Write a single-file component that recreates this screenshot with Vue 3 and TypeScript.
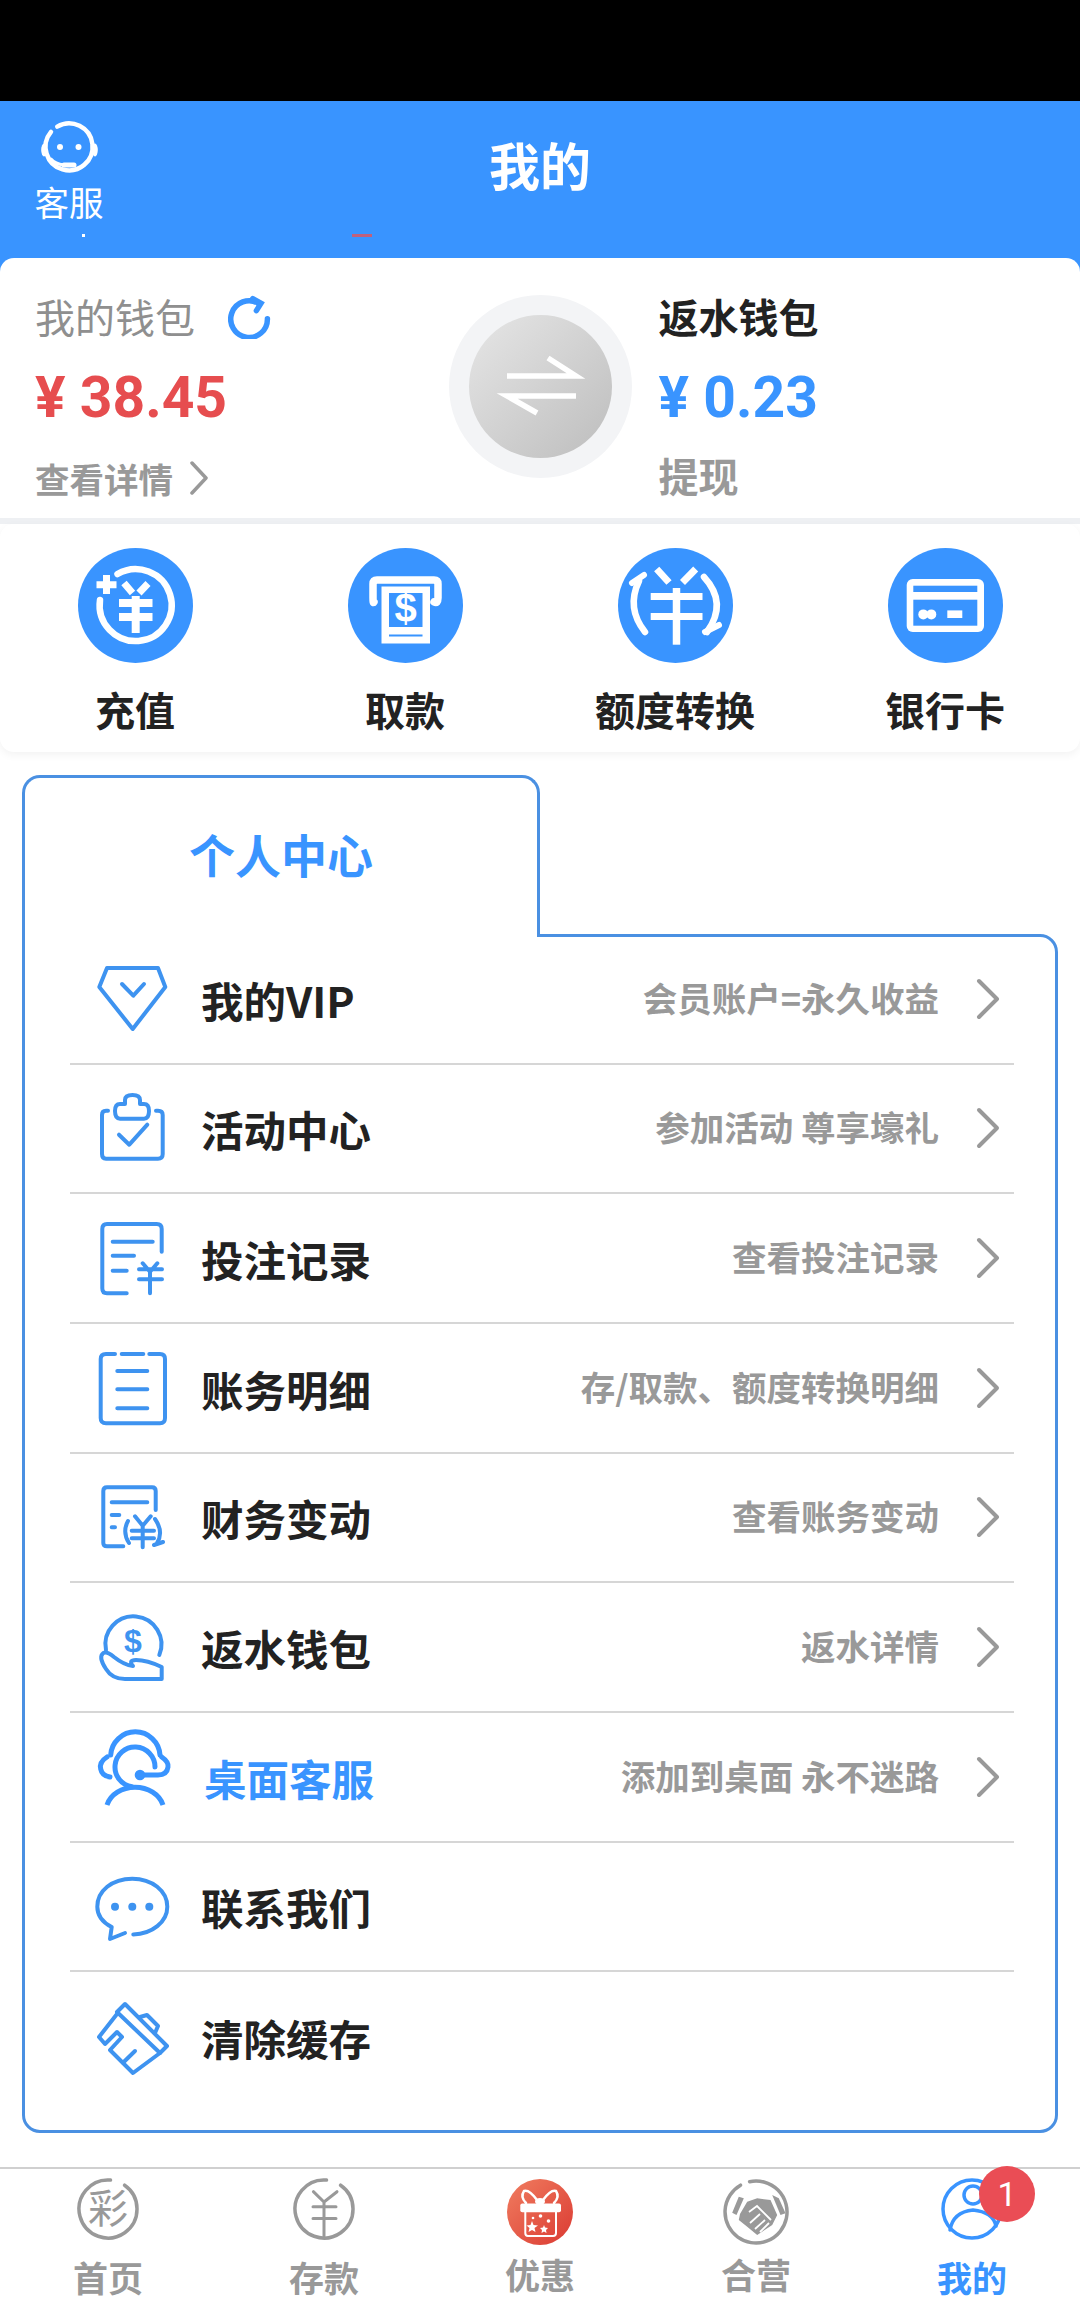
<script setup lang="ts">
interface Row {
  icon: string
  title: string
  sub?: string
  accent?: boolean
}
const actions = ['充值', '取款', '额度转换', '银行卡']
const rows: Row[] = [
  { icon: 'vip', title: '我的VIP', sub: '会员账户=永久收益' },
  { icon: 'activity', title: '活动中心', sub: '参加活动 尊享壕礼' },
  { icon: 'bets', title: '投注记录', sub: '查看投注记录' },
  { icon: 'ledger', title: '账务明细', sub: '存/取款、额度转换明细' },
  { icon: 'finance', title: '财务变动', sub: '查看账务变动' },
  { icon: 'rebate', title: '返水钱包', sub: '返水详情' },
  { icon: 'service', title: '桌面客服', sub: '添加到桌面 永不迷路', accent: true },
  { icon: 'chat', title: '联系我们' },
  { icon: 'brush', title: '清除缓存' }
]
</script>

<template>
  <div class="page">
    <div class="status"></div>
    <header class="header">
      <div class="service">
        <svg class="service-icon" viewBox="0 0 66 66" fill="none" stroke="#fff" stroke-width="4.500" stroke-linecap="round">
          <path d="M21.250 12.600 A23.500 23.500 0 1 1 15 17.900" />
          <path d="M15 45 Q19 50 28 51" stroke-width="3" />
          <path d="M28 51 H38" stroke-width="5" />
          <ellipse cx="8" cy="36" rx="2.800" ry="6.500" fill="#fff" stroke="none" />
          <ellipse cx="59" cy="36" rx="2.800" ry="6.500" fill="#fff" stroke="none" />
          <circle cx="24" cy="33" r="3" fill="#fff" stroke="none" />
          <circle cx="42.500" cy="33" r="3" fill="#fff" stroke="none" />
        </svg>
        <span class="service-label">客服</span>
      </div>
      <h1 class="title">我的</h1>
      <i class="speck speck-white"></i>
      <i class="speck speck-red"></i>
    </header>

    <div class="wallet-wrap">
      <section class="wallet">
        <div class="wallet-col">
          <div class="wallet-head">
            <span class="wallet-name">我的钱包</span>
            <svg class="refresh" viewBox="0 0 48 48" fill="none" stroke="#3994ff" stroke-width="6" stroke-linecap="round">
              <path d="M33 9 A20 20 0 1 0 43 26" />
              <path d="M27 4 L36 9 L31 17" fill="none" />
            </svg>
          </div>
          <div class="amount amount-red">¥ 38.45</div>
          <div class="wallet-link">
            <span>查看详情</span>
            <svg class="link-arrow" viewBox="0 0 20 34" fill="none" stroke="#999" stroke-width="3.500" stroke-linecap="round" stroke-linejoin="round">
              <path d="M3 2 L17 17 L3 32" />
            </svg>
          </div>
        </div>
        <div class="swap">
          <div class="swap-inner">
            <svg viewBox="0 0 143 143" fill="none" stroke="#fff" stroke-width="5.500">
              <path d="M38 61 H107 L79 43" />
              <path d="M107 81 H38 L68 98" />
            </svg>
          </div>
        </div>
        <div class="wallet-col wallet-col-right">
          <div class="wallet-head"><span class="wallet-name wallet-name-strong">返水钱包</span></div>
          <div class="amount amount-blue">¥ 0.23</div>
          <div class="wallet-link wallet-link-big">提现</div>
        </div>
      </section>
    </div>

    <section class="actions">
      <div v-for="(label, i) in actions" :key="label" class="action">
        <svg class="action-icon" viewBox="0 0 115 115">
          <circle cx="57.500" cy="57.500" r="57.500" fill="#3994ff" />
          <g v-if="i === 0" fill="none" stroke="#fff">
            <path d="M39.500 26 A36 36 0 1 1 22 52" stroke-width="6.500" stroke-linecap="round" />
            <path d="M18.500 36.700 H38.500 M28.500 27 V46" stroke-width="7" />
            <path d="M46 35 L54.500 45 M70 35.500 L61 45" stroke-width="7" />
            <path d="M41 55 H74.500 M41 69 H74.500" stroke-width="8" />
            <path d="M57.700 48 V85" stroke-width="8" />
          </g>
          <g v-else-if="i === 1">
            <path d="M26 54 Q25 56 25 50 V36 Q25 32 29 32 H86 Q90 32 90 36 V50 Q90 56 86 54" fill="none" stroke="#fff" stroke-width="7.500" stroke-linecap="round" />
            <rect x="33.500" y="38.500" width="48.500" height="57" fill="#fff" />
            <rect x="41" y="45" width="33.500" height="34" fill="#3994ff" />
            <rect x="41" y="86.500" width="33.500" height="2" fill="#3994ff" />
            <text x="57.700" y="74" text-anchor="middle" class="dollar">$</text>
          </g>
          <g v-else-if="i === 2" fill="none" stroke="#fff">
            <path d="M21 33 Q8 60 27 84" stroke-width="6.500" stroke-linecap="round" />
            <path d="M14 35 L26 27" stroke-width="6" stroke-linecap="round" />
            <path d="M86 29 Q110 55 89 84" stroke-width="6.500" stroke-linecap="round" />
            <path d="M101 77 L87 84" stroke-width="6" stroke-linecap="round" />
            <path d="M38.700 21 L51 34.500 M77.700 21 L64.500 34.500" stroke-width="7" />
            <path d="M32.700 48.500 H84.500 M32.700 68.500 H84.500" stroke-width="7" />
            <path d="M58.500 40 V96.700" stroke-width="7.500" />
          </g>
          <g v-else>
            <rect x="18.700" y="31" width="77.300" height="53" rx="6" fill="#fff" />
            <rect x="25.300" y="37.700" width="64" height="6.300" fill="#3994ff" />
            <rect x="25.300" y="51.700" width="64" height="26" fill="#3994ff" />
            <circle cx="35.300" cy="66.400" r="5" fill="#fff" />
            <circle cx="43.300" cy="66.400" r="5" fill="#fff" />
            <rect x="59.300" y="62.400" width="15" height="7.600" fill="#fff" />
          </g>
        </svg>
        <span class="action-label">{{ label }}</span>
      </div>
    </section>

    <section class="center">
      <div class="tab">个人中心</div>
      <div class="panel">
        <div v-for="row in rows" :key="row.title" class="row">
          <svg class="row-icon" viewBox="0 0 80 80" fill="none" stroke="#3e93f0" stroke-width="4" stroke-linecap="round" stroke-linejoin="round">
            <template v-if="row.icon === 'vip'">
              <path d="M15 9 H66 L73.300 28 L40.700 70 L7.300 28 Z" />
              <path d="M30 25 L41.300 36.700 L52 25" />
            </template>
            <template v-else-if="row.icon === 'activity'">
              <path d="M16 22.700 H14 Q10 22.700 10 27 V66 Q10 70.700 14 70.700 H66 Q70.700 70.700 70.700 66 V27 Q70.700 22.700 66 22.700 H64" />
              <path d="M33 16 V12 Q33 7 40.500 7 Q48 7 48 12 V16 H52 Q57 16 57 23 Q57 30.700 52 30.700 H28 Q23 30.700 23 23 Q23 16 28 16 Z" />
              <path d="M27 46.700 L37.300 56.700 L55.300 36.700" />
            </template>
            <template v-else-if="row.icon === 'bets'">
              <path d="M69.700 33.700 V11 Q69.700 6 64.700 6 H15 Q10.300 6 10.300 11 V70.300 Q10.300 75.300 15 75.300 H34.700" />
              <path d="M20.700 23.700 H60.700 M20.700 37.700 H42 M20.700 52.700 H34.700" />
              <path d="M50.700 45.300 L58 53.700 L65.300 45.300 M47 51.300 H70 M47 61.300 H70 M58 53.700 V75.300" />
            </template>
            <template v-else-if="row.icon === 'ledger'">
              <path d="M23 6 H14 Q8.700 6 8.700 11 V70 Q8.700 75.300 14 75.300 H68 Q73 75.300 73 70 V11 Q73 6 68 6 H57.300" />
              <path d="M29.700 6 H51.300 M25.300 23 H55.300 M25.300 41.300 H55.300 M25.300 60.300 H55.300" />
            </template>
            <template v-else-if="row.icon === 'finance'">
              <path d="M63.700 33 V14 Q63.700 10.300 60 10.300 H15 Q11.300 10.300 11.300 14 V66 Q11.300 69.300 15 69.300 H31.300" />
              <path d="M19.700 25.300 H55.300 M19.700 38 H27.300 M19.700 50.300 H23" />
              <path d="M36 44 Q30 55 37 66 M63 42 Q72 55 65 66 M71 65 L62 68" />
              <path d="M43 39.300 L50.700 48.700 L58.700 39.300 M39.700 53.700 H62 M39.700 61.300 H62 M50.700 48.700 V70.300" />
            </template>
            <template v-else-if="row.icon === 'rebate'">
              <path d="M14 43 A28 28 0 1 1 67.300 48" />
              <path d="M11.300 46 Q15 44 22 50 Q32 58 41 59 Q36 53 44 53 Q55 53 69.700 60 V72 H33 Q20 72 14 62 Q6 50 11.300 46 Z" />
              <text x="41" y="45" text-anchor="middle" class="row-dollar">$</text>
            </template>
            <template v-else-if="row.icon === 'service'">
              <g stroke-width="5" stroke="#3994ff">
                <path d="M18.700 18 A24.700 24.700 0 0 1 68 18" />
                <path d="M15 20 Q7 25 8.700 32 Q10 39 18 40" />
                <path d="M69.700 20 Q77 25 76 30 Q75 38 66 38 H48" />
                <path d="M63 30 A20 20 0 1 0 40 49.800" />
                <path d="M15 68 A29 24 0 0 1 71 68" stroke-linecap="butt" />
              </g>
              <circle cx="48" cy="38" r="5.300" fill="#3994ff" stroke="none" />
            </template>
            <template v-else-if="row.icon === 'chat'">
              <path d="M41.300 68.400 C60 68 75.300 56 75.300 40.700 C75.300 25 60 12.700 40.300 12.700 C20 12.700 5.300 25 5.300 40.700 C5.300 49 10 56 19.700 61 L18 73 L33 67" />
              <circle cx="23" cy="40.700" r="4" fill="#3e93f0" stroke="none" />
              <circle cx="40.300" cy="40.700" r="4" fill="#3e93f0" stroke="none" />
              <circle cx="57.300" cy="40.700" r="4" fill="#3e93f0" stroke="none" />
            </template>
            <template v-else>
              <path d="M25 15 L33 7 L75 49 L68 56 Z" />
              <path d="M48 20 L55 18 L66 29 L63 36" />
              <path d="M25 17 L7 40 L13 47 L25 35 L30 40 L18 53 L41 76 L68 56" />
              <path d="M31 65.700 L43 54" />
            </template>
          </svg>
          <span class="row-title" :class="{ 'row-title-accent': row.accent }">{{ row.title }}</span>
          <template v-if="row.sub">
            <span class="row-sub">{{ row.sub }}</span>
            <svg class="chevron" viewBox="0 0 26 42" fill="none" stroke="#999" stroke-width="4" stroke-linecap="round" stroke-linejoin="round">
              <path d="M4 3 L22 21 L4 39" />
            </svg>
          </template>
        </div>
      </div>
    </section>

    <nav class="nav">
      <div class="nav-item">
        <svg class="nav-icon" viewBox="0 0 62 62" fill="none" stroke="#999" stroke-width="3.500" stroke-linecap="round">
          <path d="M47.600 7.200 A29 29 0 1 1 33.500 2.100" />
          <text x="31" y="45" text-anchor="middle" class="nav-glyph">彩</text>
        </svg>
        <span class="nav-label">首页</span>
      </div>
      <div class="nav-item">
        <svg class="nav-icon" viewBox="0 0 62 62" fill="none" stroke="#999" stroke-width="3.500" stroke-linecap="round">
          <path d="M47.600 7.200 A29 29 0 1 1 33.500 2.100" />
          <path d="M20.400 13.700 L31 24 L44 13.700 M20 28.700 H43 M20 40.400 H43 M31 24 V58.700" stroke-width="3" />
        </svg>
        <span class="nav-label">存款</span>
      </div>
      <div class="nav-item nav-item-raised">
        <svg class="nav-icon-lg" viewBox="0 0 66 66">
          <defs>
            <linearGradient id="giftGrad" x1="0" y1="0" x2="1" y2="1">
              <stop offset="0" stop-color="#f07d60" />
              <stop offset="1" stop-color="#db3a32" />
            </linearGradient>
          </defs>
          <circle cx="33" cy="33" r="33" fill="url(#giftGrad)" />
          <path d="M30 21 Q22 10 17 12 Q13 18 19 24 M36 21 Q44 10 49 12 Q53 18 47 24" fill="none" stroke="#fff" stroke-width="2.500" stroke-linecap="round" />
          <ellipse cx="33" cy="22.500" rx="5" ry="3.500" fill="#fff" />
          <rect x="13.300" y="24.600" width="40.700" height="8.600" rx="2" fill="#fff" />
          <path d="M18.300 33 V54 Q18.300 57 21 57 H46 Q49 57 49 54 V33" fill="none" stroke="#fff" stroke-width="2" />
          <path d="M25 42 L26.500 46 L31 46.500 L27.500 49 L28.500 53 L25 51 L21.500 53 L22.500 49 L19.500 46.500 L23.500 46 Z" fill="#fff" />
          <path d="M37 46 L38 48.500 L41 49 L39 51 L39.500 54 L37 52.500 L34.500 54 L35 51 L33 49 L36 48.500 Z" fill="#fff" />
          <circle cx="33.500" cy="37" r="1.800" fill="#fff" />
          <circle cx="26" cy="39" r="1.300" fill="#fff" />
          <circle cx="41.500" cy="42" r="1.800" fill="#fff" />
        </svg>
        <span class="nav-label">优惠</span>
      </div>
      <div class="nav-item nav-item-raised">
        <svg class="nav-icon-lg" viewBox="0 0 66 66">
          <path d="M17.500 6.200 A31 31 0 1 0 26.600 2.700" fill="none" stroke="#999" stroke-width="3.500" stroke-linecap="round" />
          <path d="M15.800 17.700 L20.800 19.300 L13.500 36 L9.200 33.700 Z" fill="#999" />
          <path d="M49.200 16 L55.800 19.300 L62.500 34.300 L57.500 36 Z" fill="#999" />
          <path d="M24.200 22.700 L34.200 19.300 L47.500 21 L54.200 36 L49.200 46 L34.200 56 L24.200 47.700 L15.800 41 L17 35 Z" fill="#999" />
          <path d="M26 33 L34 27 L48 41 M32 50 L42 41 M37 53 L46 44 M27 44 L37 35" fill="none" stroke="#fff" stroke-width="1.800" />
        </svg>
        <span class="nav-label">合营</span>
      </div>
      <div class="nav-item nav-item-active">
        <svg class="nav-icon" viewBox="0 0 62 62" fill="none" stroke="#3994ff" stroke-width="3.500" stroke-linecap="round">
          <circle cx="31" cy="31" r="29" />
          <circle cx="32" cy="17" r="9" />
          <path d="M9 52 Q12 34 32 32 Q52 34 55 48" />
        </svg>
        <span class="nav-label">我的</span>
        <span class="badge">1</span>
      </div>
    </nav>
  </div>
</template>

<style scoped>
.page {
  width: 1080px;
  height: 2310px;
  overflow: hidden;
  background: #fff;
  font-family: "Noto Sans CJK SC", "Noto Sans", sans-serif;
  color: #222;
}
.status {
  height: 101px;
  background: #000;
}
.header {
  position: relative;
  height: 157px;
  background: #3994ff;
  display: grid;
  grid-template-columns: 200px 1fr 200px;
  color: #fff;
}
.service {
  display: flex;
  flex-direction: column;
  align-items: center;
  width: 66px;
  margin-left: 36px;
  padding-top: 13px;
}
.service-icon {
  width: 66px;
  height: 66px;
  display: block;
}
.service-label {
  margin-top: 1px;
  font-size: 34.500px;
  line-height: 40px;
  white-space: nowrap;
}
.title {
  margin: 0;
  padding-top: 33px;
  text-align: center;
  font-size: 51px;
  line-height: 60px;
  font-weight: 700;
}
.speck {
  position: absolute;
  top: 133px;
  height: 3px;
}
.speck-white {
  left: 82px;
  width: 3px;
  background: #fff;
}
.speck-red {
  left: 352px;
  width: 20px;
  background: #c0607c;
}
.wallet-wrap {
  background: linear-gradient(#3994ff 20px, #eef0f3 20px);
  padding-bottom: 6px;
}
.wallet {
  height: 260px;
  background: #fff;
  border-radius: 14px 14px 0 0;
  display: grid;
  grid-template-columns: 1fr 183px 1fr;
  box-sizing: border-box;
}
.wallet-col {
  display: flex;
  flex-direction: column;
  gap: 20px;
  padding: 30px 0 0 35px;
}
.wallet-col-right {
  padding-left: 27px;
}
.wallet-head {
  height: 57px;
  margin-bottom: 3px;
  display: flex;
  align-items: center;
}
.wallet-name {
  font-size: 40px;
  line-height: 57px;
  color: #8f8f8f;
}
.wallet-name-strong {
  color: #222;
  font-weight: 700;
}
.refresh {
  width: 44px;
  height: 44px;
  margin-left: 33px;
  flex: none;
}
.amount {
  height: 60px;
  font-family: Roboto, "Liberation Sans", sans-serif;
  font-size: 57px;
  line-height: 60px;
  font-weight: 700;
  white-space: nowrap;
}
.amount-red {
  color: #e64d4f;
}
.amount-blue {
  color: #3994ff;
}
.wallet-link {
  height: 60px;
  display: flex;
  align-items: center;
  font-size: 34.500px;
  line-height: 60px;
  font-weight: 700;
  color: #999;
}
.wallet-link-big {
  font-size: 40px;
  line-height: 54px;
  height: 54px;
}
.link-arrow {
  width: 20px;
  height: 34px;
  margin-left: 16px;
}
.swap {
  width: 183px;
  height: 183px;
  margin-top: 37px;
  border-radius: 50%;
  background: #f3f4f6;
  display: flex;
  align-items: center;
  justify-content: center;
}
.swap-inner {
  width: 143px;
  height: 143px;
  border-radius: 50%;
  background: linear-gradient(135deg, #e6e6e6, #bdbdbd);
}
.swap-inner svg {
  display: block;
  width: 143px;
  height: 143px;
}
.actions {
  height: 228px;
  box-sizing: border-box;
  padding-top: 24px;
  background: #fff;
  border-radius: 14px;
  box-shadow: 0 3px 8px rgba(0, 0, 0, 0.05);
  display: grid;
  grid-template-columns: repeat(4, 1fr);
}
.action {
  display: flex;
  flex-direction: column;
  align-items: center;
}
.action-icon {
  width: 115px;
  height: 115px;
  display: block;
}
.dollar {
  font-family: "Liberation Sans", sans-serif;
  font-weight: 700;
  font-size: 40px;
  fill: #fff;
}
.action-label {
  margin-top: 21px;
  font-size: 40px;
  line-height: 50px;
  font-weight: 700;
}
.center {
  padding: 23px 22px 0;
}
.tab {
  position: relative;
  z-index: 1;
  width: 518px;
  height: 162px;
  box-sizing: border-box;
  padding-top: 47px;
  background: #fff;
  border: 3px solid #4a90e2;
  border-bottom: 0;
  border-radius: 18px 18px 0 0;
  text-align: center;
  color: #3994ff;
  font-size: 46px;
  line-height: 56px;
  font-weight: 700;
}
.panel {
  margin-top: -3px;
  height: 1199px;
  box-sizing: border-box;
  border: 3px solid #4a90e2;
  border-radius: 0 18px 18px 18px;
  padding: 0 41px 0 45px;
}
.row {
  position: relative;
  z-index: 1;
  top: -2px;
  display: flex;
  align-items: center;
  height: 129.670px;
  box-sizing: border-box;
  border-bottom: 2px solid #d6d6d6;
}
.row:last-child {
  border-bottom: 0;
}
.row-icon {
  width: 80px;
  height: 80px;
  margin-left: 22px;
  flex: none;
  overflow: visible;
}
.row-dollar {
  font-family: "Liberation Sans", sans-serif;
  font-weight: 700;
  font-size: 32px;
  fill: #3e93f0;
  stroke: none;
}
.row-title {
  margin-left: 29px;
  padding-top: 2px;
  font-size: 42.500px;
  line-height: 56px;
  font-weight: 700;
}
.row-title-accent {
  margin-left: 32px;
  padding-top: 2px;
  color: #3994ff;
}
.row-sub {
  margin-left: auto;
  padding-bottom: 4px;
  font-size: 34.500px;
  line-height: 44px;
  font-weight: 700;
  color: #999;
  white-space: nowrap;
}
.chevron {
  width: 26px;
  height: 42px;
  margin: 0 13px 0 36px;
  flex: none;
}
.nav {
  margin-top: 34px;
  height: 143px;
  box-sizing: border-box;
  border-top: 2px solid #d0d0d0;
  display: grid;
  grid-template-columns: repeat(5, 216px);
}
.nav-item {
  position: relative;
  display: flex;
  flex-direction: column;
  align-items: center;
  padding-top: 9px;
}
.nav-icon {
  width: 62px;
  height: 62px;
  display: block;
}
.nav-icon-lg {
  width: 66px;
  height: 66px;
  display: block;
}
.nav-glyph {
  font-family: "Noto Sans CJK SC", sans-serif;
  font-size: 40px;
  fill: #999;
  stroke: none;
}
.nav-label {
  margin-top: 17px;
  font-size: 35px;
  line-height: 40px;
  font-weight: 700;
  color: #999;
}
.nav-item-raised {
  padding-top: 10px;
}
.nav-item-raised .nav-label {
  margin-top: 9px;
}
.nav-item-active .nav-label {
  color: #3994ff;
}
.badge {
  position: absolute;
  left: 115px;
  top: -3px;
  width: 56px;
  height: 56px;
  border-radius: 50%;
  background: #ea4d55;
  color: #fff;
  font-family: Roboto, sans-serif;
  font-size: 34px;
  line-height: 56px;
  text-align: center;
}
</style>
